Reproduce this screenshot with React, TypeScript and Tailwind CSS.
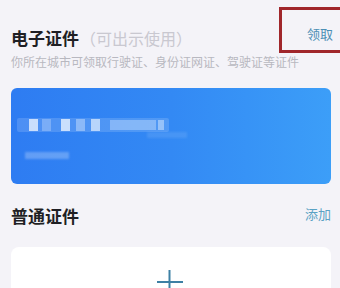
import React from "react";

export default function App() {
  const font = { fontFamily: '"Noto Sans CJK SC", "Noto Sans", sans-serif' };
  return (
    <div
      className="relative w-[340px] h-[288px] overflow-hidden bg-[#f4f3f8] pl-[11px] pr-[9px] pt-[26px]"
      style={font}
    >
      {/* header */}
      <div className="flex items-center justify-between h-[24px]">
        <div className="flex items-center leading-[24px]">
          <span className="text-[17px] font-bold text-[#1f1f24]">电子证件</span>
          <span className="text-[16px] text-[#c9c8d0] ml-[1px]">（可出示使用）</span>
        </div>
        <span className="text-[13px] text-[#4d8fb5] mr-[-2px] leading-[24px] mb-[8px]">领取</span>
      </div>
      <div className="mt-[4px] text-[12px] leading-[16px] text-[#b8b8c0] whitespace-nowrap">
        你所在城市可领取行驶证、身份证网证、驾驶证等证件
      </div>

      {/* blue card */}
      <div className="mt-[18px] h-[96px] rounded-[6px] bg-gradient-to-r from-[#2e7cf2] via-[#3389f4] to-[#3c9ef8] relative overflow-hidden flex flex-col pl-[6px] pt-[30px]">
        <div className="flex items-center h-[14px] w-[152px] bg-white/15 rounded-[2px] blur-[0.6px] shrink-0">
          <div className="ml-[12px] w-[9px] h-[12px] bg-white/70" />
          <div className="ml-[4px] w-[9px] h-[12px] bg-white/25" />
          <div className="ml-[10px] w-[9px] h-[12px] bg-white/70" />
          <div className="ml-[6px] w-[9px] h-[12px] bg-white/35" />
          <div className="ml-[6px] w-[9px] h-[12px] bg-white/60" />
          <div className="ml-[10px] w-[46px] h-[10px] bg-white/30" />
          <div className="ml-[2px] w-[6px] h-[10px] bg-white/40" />
        </div>
        <div className="ml-[130px] w-[40px] h-[6px] bg-white/10 blur-[1px] shrink-0" />
        <div className="mt-[14px] ml-[8px] w-[44px] h-[7px] bg-white/25 blur-[0.8px] shrink-0" />
      </div>

      {/* normal section */}
      <div className="mt-[20px] flex items-center justify-between h-[24px]">
        <span className="text-[17px] font-bold text-[#1f1f24] leading-[24px]">普通证件</span>
        <span className="text-[13px] text-[#5aa2c4] leading-[24px] mb-[4px]">添加</span>
      </div>
      <div className="mt-[19px] h-[60px] rounded-[8px] bg-white relative">
        <svg className="absolute left-[146px] top-[23px]" width="26" height="30" viewBox="0 0 26 30">
          <line x1="12.5" y1="0" x2="12.5" y2="30" stroke="#3d80a4" strokeWidth="2" />
          <line x1="0" y1="12" x2="26" y2="12" stroke="#3d80a4" strokeWidth="2" />
        </svg>
      </div>

      {/* red annotation box */}
      <div className="absolute left-[279px] top-[7px] w-[70px] h-[46px] border-[3px] border-[#a0262b] pointer-events-none" />
    </div>
  );
}
